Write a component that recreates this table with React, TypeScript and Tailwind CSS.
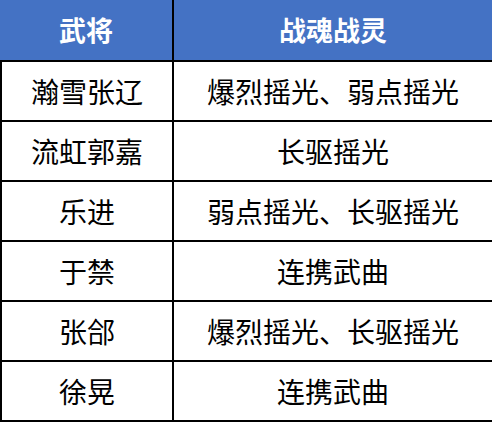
const rows: [string, string][] = [
  ['瀚雪张辽', '爆烈摇光、弱点摇光'],
  ['流虹郭嘉', '长驱摇光'],
  ['乐进', '弱点摇光、长驱摇光'],
  ['于禁', '连携武曲'],
  ['张郃', '爆烈摇光、长驱摇光'],
  ['徐晃', '连携武曲'],
]

export default function App() {
  return (
    <div
      className="w-[492px] h-[422px] bg-white text-black"
      style={{ fontFamily: '"Noto Sans CJK SC", "Noto Sans", sans-serif' }}
    >
      {/* Header */}
      <div className="flex h-[60px] bg-[#4472c4] text-white text-[27px] font-bold">
        <div className="w-[172px] flex items-center justify-center">武将</div>
        <div className="w-[2px] bg-black" />
        <div className="flex-1 flex items-center justify-center">战魂战灵</div>
      </div>

      {/* Body */}
      <div className="border-l-2 border-b-2 border-black">
        {rows.map(([name, soul]) => (
          <div key={name} className="flex h-[60px] border-t-2 border-black text-[28px]">
            <div className="w-[170px] flex items-center justify-center">{name}</div>
            <div className="w-[2px] bg-black" />
            <div className="flex-1 flex items-center justify-center">{soul}</div>
          </div>
        ))}
      </div>
    </div>
  )
}
